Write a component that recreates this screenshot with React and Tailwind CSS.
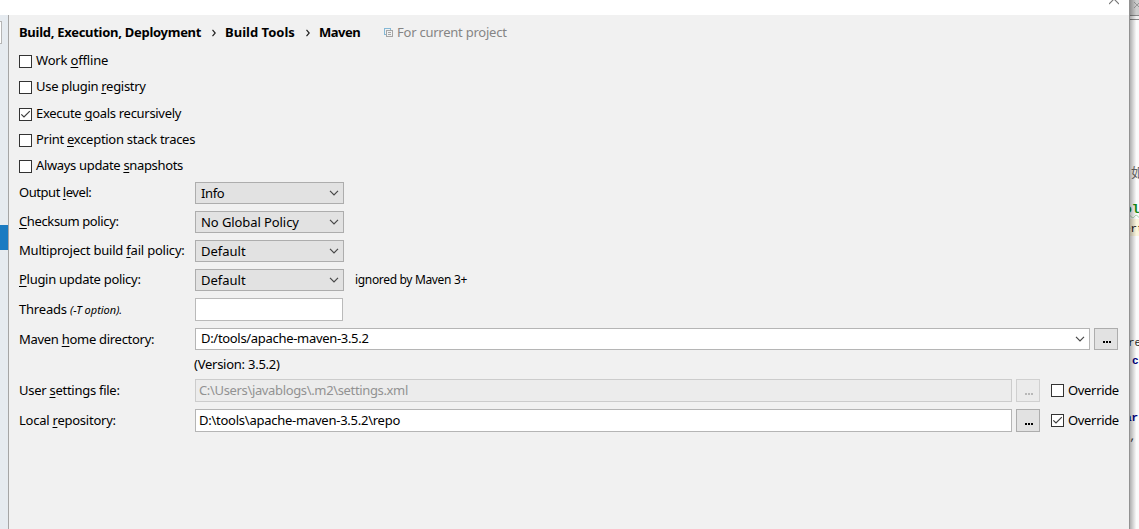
import React from "react";

function Label({ text, mark, className = "" }) {
  const i = mark === undefined ? -1 : mark;
  return (
    <span className={`block whitespace-pre ${className}`}>
      {i < 0 ? (
        text
      ) : (
        <>
          {text.slice(0, i)}
          <span className="underline decoration-1 underline-offset-2">{text[i]}</span>
          {text.slice(i + 1)}
        </>
      )}
    </span>
  );
}

function Box({ checked }) {
  return (
    <span className="block h-[13px] w-[13px] shrink-0 border border-[#333] bg-white">
      {checked && (
        <svg className="block" width="11" height="11" viewBox="0 0 11 11" fill="none" stroke="#3c3c3c" strokeWidth="1.2">
          <path d="M1.3 5.3 L4 8 L9.8 2.2" />
        </svg>
      )}
    </span>
  );
}

function CheckRow({ text, mark, checked, height, spacing }) {
  return (
    <div className={`flex gap-1 pt-[7px] ${height}`}>
      <Box checked={checked} />
      <Label text={text} mark={mark} className={`h-[13px] leading-[10px] ${spacing}`} />
    </div>
  );
}

function Chevron() {
  return (
    <svg className="shrink-0" width="10" height="6" viewBox="0 0 10 6" fill="none" stroke="#484848" strokeWidth="1.2">
      <path d="M1 0.8 L5 4.8 L9 0.8" />
    </svg>
  );
}

function Select({ value, spacing = "" }) {
  return (
    <div className="flex h-[22px] w-[149px] items-center justify-between border border-[#adadad] bg-[#e2e2e2] pl-[5px] pr-1">
      <span className={spacing}>{value}</span>
      <Chevron />
    </div>
  );
}

function Row({ text, mark, spacing, height = "h-[22px]", children }) {
  return (
    <div className={`flex items-center ${height}`}>
      <div className="w-[176px] shrink-0">
        <Label text={text} mark={mark} className={spacing} />
      </div>
      {children}
    </div>
  );
}

function Browse({ disabled, size }) {
  return (
    <div
      className={`ml-1 flex w-6 shrink-0 items-center justify-center gap-px border pl-px pt-1.5 ${size} ${
        disabled ? "border-[#d0d0d0] bg-[#ebebeb] text-[#b8b8b8]" : "border-[#adadad] bg-[#e2e2e2] text-black"
      }`}
    >
      <i className="h-0.5 w-0.5 bg-current" />
      <i className="h-0.5 w-0.5 bg-current" />
      <i className="h-0.5 w-0.5 bg-current" />
    </div>
  );
}

function Override({ checked }) {
  return (
    <div className="ml-[11px] flex shrink-0 items-center gap-1">
      <Box checked={checked} />
      <span className="-mt-px w-[51px] tracking-[-0.33px]">Override</span>
    </div>
  );
}

function Crumb() {
  return (
    <svg className="ml-[11px] mr-[9px] mt-[2px]" width="4" height="8" viewBox="0 0 4 8" fill="none" stroke="#222" strokeWidth="1.2">
      <path d="M0.5 0.8 L3.2 4 L0.5 7.2" />
    </svg>
  );
}

function Settings() {
  return (
    <main className="flex w-[1120px] shrink-0 flex-col bg-[#f1f1f1]">
      <div className="flex h-[15px] shrink-0 justify-end bg-white pr-[10px]">
        <svg width="10" height="5" viewBox="0 0 10 5" fill="none" stroke="#777" strokeWidth="1.1">
          <path d="M0 4 L5 -1 L10 4" />
        </svg>
      </div>
      <div className="flex flex-col px-[10px]">
        <div className="flex h-[33px] items-center pb-px pt-0.5 font-bold">
          <span className="w-[182px] whitespace-nowrap tracking-[-0.28px]">Build, Execution, Deployment</span>
          <Crumb />
          <span className="w-[70px] tracking-[0.02px]">Build Tools</span>
          <Crumb />
          <span className="w-[41px] tracking-[-0.5px]">Maven</span>
          <svg className="ml-6 mr-1" width="9" height="9" viewBox="0 0 9 9" fill="none" shapeRendering="crispEdges">
            <path d="M2 6.5 H0.5 V0.5 H6.5 V2" stroke="#86b9d6" />
            <path d="M2.5 2.5 H8.5 V8.5 H2.5 Z M4 4.5 H7 M4 6.5 H7" stroke="#a5a5a5" />
          </svg>
          <span className="font-normal tracking-[-0.24px] text-[#858585]">For current project</span>
        </div>
        <CheckRow text="Work offline" mark={5} height="h-[26px]" spacing="tracking-[-0.17px]" />
        <CheckRow text="Use plugin registry" mark={11} height="h-[27px]" spacing="tracking-[-0.3px]" />
        <CheckRow text="Execute goals recursively" mark={8} checked height="h-[26px]" spacing="tracking-[-0.3px]" />
        <CheckRow text="Print exception stack traces" mark={6} height="h-[26px]" spacing="tracking-[-0.28px]" />
        <CheckRow text="Always update snapshots" mark={14} height="h-[26px]" spacing="tracking-[-0.34px]" />
        <div className="flex flex-col gap-[7px] pt-[3px]">
          <Row text="Output level:" mark={7} spacing="pb-0.5 tracking-[-0.45px]">
            <Select value="Info" spacing="tracking-[-0.4px]" />
          </Row>
          <Row text="Checksum policy:" mark={0} spacing="pb-0.5 tracking-[-0.37px]">
            <Select value="No Global Policy" spacing="tracking-[-0.08px]" />
          </Row>
          <Row text="Multiproject build fail policy:" mark={19} spacing="pb-0.5 tracking-[-0.21px]">
            <Select value="Default" />
          </Row>
          <Row text="Plugin update policy:" mark={0} spacing="pb-0.5 tracking-[-0.29px]">
            <Select value="Default" />
            <span className="ml-[11px] text-[12px] tracking-[-0.33px]">ignored by Maven 3+</span>
          </Row>
          <div className="flex h-[23px] items-center">
            <div className="w-[176px] pb-px">
              <span className="tracking-[-0.2px]">Threads </span>
              <i className="text-[11px]">(-T option).</i>
            </div>
            <div className="h-[23px] w-[148px] border border-[#bababa] bg-white" />
          </div>
          <Row text="Maven home directory:" mark={6} spacing="tracking-[-0.29px]">
            <div className="flex h-[22px] flex-1 items-center justify-between border border-[#b5b5b5] bg-white pl-[5px] pr-1">
              <span className="pb-0.5 tracking-[-0.31px]">D:/tools/apache-maven-3.5.2</span>
              <Chevron />
            </div>
            <Browse size="mr-px h-[22px]" />
          </Row>
        </div>
        <div className="flex h-[29px] items-center pb-px pl-[175px] tracking-[-0.25px]">(Version: 3.5.2)</div>
        <div className="flex flex-col gap-[7px]">
          <Row text="User settings file:" mark={5} height="h-[23px]" spacing="pb-px tracking-[-0.27px]">
            <div className="flex h-[23px] w-[817px] shrink-0 items-center border border-[#cccccc] bg-[#ececec] pl-[3px] text-[#929292]">
              <span className="pb-px tracking-[-0.35px]">C:\Users\javablogs\.m2\settings.xml</span>
            </div>
            <Browse disabled size="h-[23px]" />
            <Override />
          </Row>
          <Row text="Local repository:" mark={6} height="h-[23px]" spacing="pb-px tracking-[-0.24px]">
            <div className="flex h-[23px] w-[817px] shrink-0 items-center border border-[#b5b5b5] bg-white pl-[3px]">
              <span className="pb-px tracking-[-0.25px]">D:\tools\apache-maven-3.5.2\repo</span>
            </div>
            <Browse size="h-[23px]" />
            <Override checked />
          </Row>
        </div>
      </div>
    </main>
  );
}

function Behind() {
  return (
    <aside className="relative w-[10px] overflow-hidden bg-[#fbfbfb] font-['Liberation_Mono',monospace] text-[11px] leading-none">
      <div className="h-[15px] bg-[#cecece] pl-[5px] pt-0.5">
        <svg width="6" height="6" viewBox="0 0 6 6" stroke="#999" fill="none">
          <path d="M0 0 L6 6 M6 0 L0 6" />
        </svg>
      </div>
      <div className="h-[5px] border-b border-t border-[#888] bg-[#f0f0f0]" />
      <div className="absolute left-[2px] top-[165px] font-['Noto_Sans_CJK_SC',sans-serif] text-[13px] text-[#666]">如</div>
      <div className="absolute left-0 top-[219px] h-[17px] w-[10px] bg-[#fbf5dc]" />
      <div className="absolute left-[-5px] top-[203px] whitespace-pre text-[13px] font-bold text-[#118a11] underline decoration-[#a5cfa5] decoration-wavy decoration-1">ol</div>
      <div className="absolute left-[-5px] top-[224px] text-[#111]">ert</div>
      <div className="absolute left-[-1px] top-[338px] text-[#222]">re</div>
      <div className="absolute left-[3px] top-[356px] font-bold text-[#000080]">c</div>
      <div className="absolute left-[-4px] top-[413px] font-bold text-[#000080]">ar</div>
      <div className="absolute left-[-6px] top-[432px] text-[#333]">s,</div>
      <div className="absolute inset-y-0 left-0 w-[10px] border-l border-[#929292] bg-linear-to-r from-black/30 to-transparent to-70%" />
    </aside>
  );
}

export default function App() {
  return (
    <div className="flex h-[529px] w-[1139px] overflow-hidden bg-[#f1f1f1] font-['Noto_Sans','Noto_Sans_CJK_SC',sans-serif] text-[13px] leading-[18px] text-black">
      <div className="flex w-[9px] shrink-0 flex-col">
        <div className="h-[15px] shrink-0 bg-white" />
        <div className="flex-1 border-r border-[#a5a5a5] bg-[#e6ebf0] pt-1.5">
          <div className="h-[23px] w-0.5 border-y border-r border-[#b5b5b5] bg-white" />
          <div className="mt-[181px] h-[25px] bg-[#1a7bc2]" />
        </div>
      </div>
      <Settings />
      <Behind />
    </div>
  );
}
